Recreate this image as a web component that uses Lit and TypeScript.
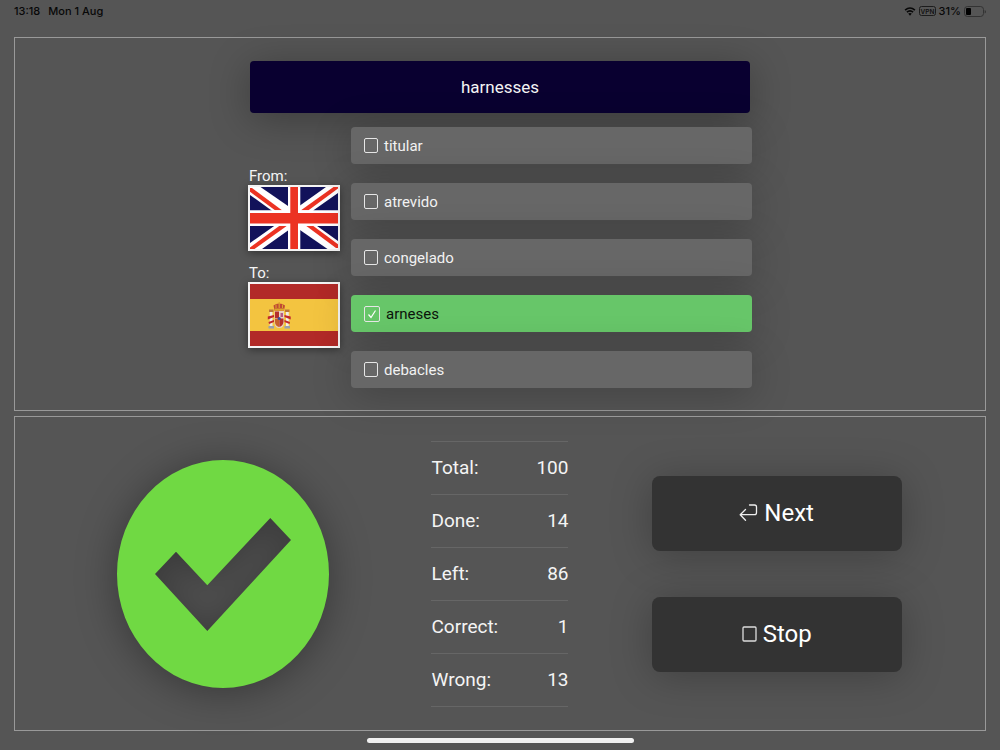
import { LitElement, html, css, svg } from "lit";
import { customElement, property } from "lit/decorators.js";

const saltireHalf = () => svg`
  <path d="M0 0H10.500L38 19V24H22.300L0 8Z" fill="#fff" />
  <path d="M0 1L2 1L32 23.300H25L0 4.800Z" fill="#ec3323" />
  <path d="M76 0H88V6L63.500 23.300V24H50V18.500Z" fill="#fff" />
  <path d="M83.500 0H88V1.500L58.500 23.300H51Z" fill="#ec3323" />`;

const ukFlag = svg`
  <rect width="88" height="62" fill="#12125a" />
  <g>${saltireHalf()}</g>
  <g transform="rotate(180 44 31)">${saltireHalf()}</g>
  <path d="M38 0H50.300V62H38ZM0 23.300H88V39H0Z" fill="#fff" />
  <path d="M40.300 0H48V62H40.300ZM0 26H88V36.500H0Z" fill="#ec3323" />`;

const spainFlag = svg`
  <rect width="88" height="62" fill="#b22a28" />
  <rect y="15" width="88" height="32" fill="#f3c440" />
  <path d="M19.800 28H22.500V42H19.800ZM36 28H38.700V42H36Z" fill="#f1ede6" />
  <path d="M18.500 42H24V44.500H18.500ZM34.500 42H40V44.500H34.500Z" fill="#9aa0ae" />
  <path d="M19 25.500H23.500V28H19ZM35 25.500H39.500V28H35Z" fill="#b8763a" />
  <path d="M17.800 32.500L24 31V33L17.800 35.500ZM40.700 32.500L34.500 31V33L40.700 35.500ZM18.500 38L24 36V38L19 40ZM40 38L34.500 36V38L39.500 40Z" fill="#c1272d" />
  <path d="M24.500 27H34V38Q34 44 29.200 44Q24.500 44 24.500 38Z" fill="#e8d3c0" />
  <path d="M25 27.500H29V34H25ZM29.300 34.500H33.500V38Q33 42 29.300 43Z" fill="#b5302c" />
  <path d="M25 34.500H29V43Q25 42 25 38Z" fill="#c8612c" />
  <path d="M30.500 29H33V33H30.500Z" fill="#b45a86" />
  <circle cx="29.200" cy="34.500" r="1.600" fill="#3b4f9b" />
  <path d="M24.500 26.500L23.500 21.500Q26 19.500 29.200 19.500Q32.500 19.500 35 21.500L34 26.500Z" fill="#c04a34" />
  <path d="M24.500 24.500H34V26.500H24.500ZM28.600 18H29.800V24H28.600ZM25.500 20.500H26.500V24H25.500ZM32 20.500H33V24H32Z" fill="#dba52b" />`;

@customElement("status-bar")
export class StatusBar extends LitElement {
  static styles = css`
    :host {
      display: flex;
      justify-content: space-between;
      align-items: center;
      height: 22px;
      padding: 0 14px;
      margin-bottom: 15px;
      color: #080808;
      font: 500 11px/14px Inter, "Liberation Sans", sans-serif;
    }
    .group { display: flex; align-items: center; gap: 8px; }
    .tight { gap: 3px; }
    svg { display: block; }
  `;
  render() {
    return html`
      <div class="group"><span>13:18</span><span>Mon 1 Aug</span></div>
      <div class="group tight">
        <svg width="12" height="9" viewBox="0 0 11 9" fill="none" stroke="#080808" stroke-width="1.600">
          <path d="M.6 3.200Q5.500-1.200 10.400 3.200M2.400 5.200Q5.500 2.500 8.600 5.200" />
          <path d="M3.700 6.600Q5.500 5.200 7.300 6.600L5.500 8.700Z" fill="#080808" stroke="none" />
        </svg>
        <svg width="17" height="10" viewBox="0 0 17 10">
          <rect x=".5" y=".5" width="16" height="9" rx="2" fill="none" stroke="#1c1c1c" />
          <text x="8.500" y="7.500" text-anchor="middle" font-size="6.500" font-weight="600" fill="#111">VPN</text>
        </svg>
        <span>31%</span>
        <svg width="22" height="11" viewBox="0 0 22 11">
          <rect x=".5" y=".5" width="19" height="10" rx="3" fill="none" stroke="#333" />
          <rect x="2" y="2" width="5" height="7" rx="1" fill="#000" />
          <path d="M20.700 4V7.500Q22 6.800 22 5.700T20.700 4" fill="#333" />
        </svg>
      </div>`;
  }
}

@customElement("answer-option")
export class AnswerOption extends LitElement {
  @property() word = "";
  @property({ type: Boolean }) picked = false;
  static styles = css`
    :host { display: block; }
    .row {
      display: flex;
      align-items: center;
      gap: 6px;
      height: 37px;
      padding: 0 13px;
      box-sizing: border-box;
      border-radius: 4px;
      background: #676767;
      box-shadow: 0 6px 40px rgba(0, 0, 0, 0.24);
      color: #f2f2f2;
      font-size: 15px;
      line-height: 20px;
    }
    .right { background: #67c669; color: #0b140b; }
    .box {
      appearance: none;
      box-sizing: border-box;
      width: 14px;
      height: 15px;
      margin: 0;
      border: 1px solid #e6e6e6;
      border-radius: 2px;
    }
    .box:checked {
      width: 16px;
      height: 16px;
      background: url("data:image/svg+xml,%3Csvg xmlns='http://www.w3.org/2000/svg' viewBox='0 0 14 14'%3E%3Cpath d='M3.500 7.500L6 10.500L10.500 3.500' fill='none' stroke='white' stroke-width='1.200'/%3E%3C/svg%3E");
    }
  `;
  render() {
    return html`<label class="row ${this.picked ? "right" : ""}">
      <input class="box" type="checkbox" .checked=${this.picked} />
      <span>${this.word}</span>
    </label>`;
  }
}

@customElement("app-root")
export class AppRoot extends LitElement {
  private words = ["titular", "atrevido", "congelado", "arneses", "debacles"];
  private answer = "arneses";
  private stats: [string, number][] = [
    ["Total:", 100], ["Done:", 14], ["Left:", 86], ["Correct:", 1], ["Wrong:", 13],
  ];

  static styles = css`
    :host {
      display: flex;
      flex-direction: column;
      min-height: 100vh;
      box-sizing: border-box;
      background: #555;
      color: #f4f4f4;
      font-family: Roboto, "Liberation Sans", sans-serif;
    }
    .panel { margin: 0 14px; border: 1px solid #999; }
    .question { padding: 23px 0 22px; margin-bottom: 5px; }
    .stage { max-width: 504px; margin: 0 auto; }
    .prompt {
      margin: 0 2px 14px;
      padding: 14px;
      border-radius: 4px;
      background: #090030;
      box-shadow: 0 6px 40px rgba(0, 0, 0, 0.3);
      font-size: 17px;
      font-weight: 400;
      line-height: 24px;
      text-align: center;
    }
    .columns { display: grid; grid-template-columns: 92px 1fr; gap: 11px; align-items: center; }
    .langs { display: grid; gap: 13px; }
    .lang { margin: 0; font-size: 15px; line-height: 18px; }
    .caption { padding-left: 1px; }
    .flag {
      display: block;
      width: 88px;
      height: 62px;
      border: 2px solid #f4f4f4;
      box-shadow: 0 2px 8px rgba(0, 0, 0, 0.4);
    }
    .options { display: grid; gap: 19px; }
    .result {
      flex: 1;
      display: grid;
      grid-template-columns: repeat(3, 1fr);
      place-items: center;
      padding: 0 70px;
    }
    .verdict { width: 212px; height: 228px; overflow: visible; filter: drop-shadow(0 4px 20px rgba(0, 0, 0, 0.35)); }
    .stats { width: 137px; border-collapse: collapse; font-size: 19px; line-height: 24px; }
    .stats th, .stats td { height: 52px; padding: 0; border-top: 1px solid #666; border-bottom: 1px solid #666; }
    .stats th { font-weight: 400; text-align: left; }
    .stats td { text-align: right; }
    .actions { display: grid; gap: 46px; width: 250px; }
    .action {
      display: flex;
      align-items: center;
      justify-content: center;
      gap: 6px;
      height: 75px;
      border: 0;
      border-radius: 8px;
      background: #333;
      box-shadow: 0 4px 40px rgba(0, 0, 0, 0.25);
      color: #fff;
      font: 400 24px/30px Roboto, "Liberation Sans", sans-serif;
    }
    .home { width: 267px; height: 5px; margin: 7px auto; border-radius: 3px; background: #f0f0f0; }
  `;

  render() {
    return html`
      <status-bar></status-bar>
      <section class="panel question">
        <div class="stage">
          <h1 class="prompt">harnesses</h1>
          <div class="columns">
            <div class="langs">
              <div class="lang">
                <span class="caption">From:</span>
                <svg class="flag" viewBox="0 0 88 62">${ukFlag}</svg>
              </div>
              <div class="lang">
                <span class="caption">To:</span>
                <svg class="flag" viewBox="0 0 88 62">${spainFlag}</svg>
              </div>
            </div>
            <div class="options">
              ${this.words.map((w) => html`<answer-option .word=${w} .picked=${w === this.answer}></answer-option>`)}
            </div>
          </div>
        </div>
      </section>
      <section class="panel result">
        <svg class="verdict" viewBox="0 0 212 228" role="img" aria-label="Correct">
          <path fill="#70d943" fill-rule="evenodd"
            d="M0 114A106 114 0 0 1 212 114A106 114 0 0 1 0 114ZM38 114L59 91.700L90.300 125.300L153.300 58L174 80L90.300 171Z" />
        </svg>
        <table class="stats">
          ${this.stats.map(([k, v]) => html`<tr><th scope="row">${k}</th><td>${v}</td></tr>`)}
        </table>
        <div class="actions">
          <button class="action" type="button">
            <svg width="19" height="18" viewBox="0 0 19 18" fill="none" stroke="#eee" stroke-width="1.300" stroke-linecap="round" stroke-linejoin="round">
              <path d="M10.500 1H15.500Q17.500 1 17.500 3V8.500Q17.500 10.700 15.500 10.700H1.200M6.500 5.500L1.200 10.700L6.500 16.300" />
            </svg>
            Next
          </button>
          <button class="action" type="button">
            <svg width="15" height="16" viewBox="0 0 15 16" fill="none" stroke="#ddd" stroke-width="1.300">
              <rect x="1" y="1" width="13" height="14" rx="1" />
            </svg>
            Stop
          </button>
        </div>
      </section>
      <div class="home"></div>`;
  }
}
